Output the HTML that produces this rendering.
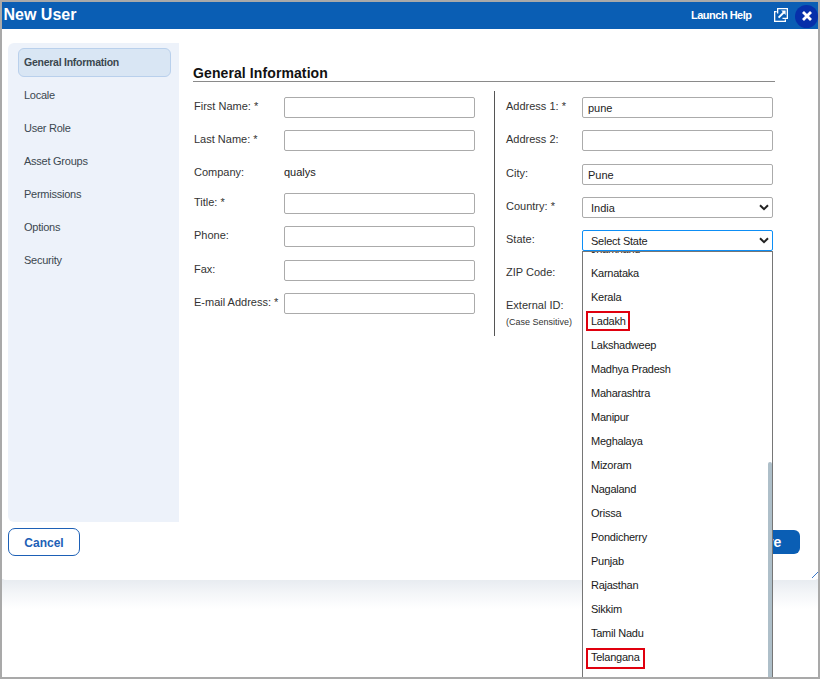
<!DOCTYPE html>
<html><head><meta charset="utf-8">
<style>
*{box-sizing:border-box;margin:0;padding:0}
html,body{width:820px;height:679px;overflow:hidden;background:#fff;font-family:"Liberation Sans",sans-serif}
#frame{position:absolute;left:0;top:0;width:820px;height:679px;border:2px solid #a9a9a9;background:#fff}
.abs{position:absolute}
#shadow{position:absolute;left:2px;top:579px;width:816px;height:30px;background:linear-gradient(#e7ebf0,#f3f5f8 45%,#fff)}
#dlg{position:absolute;left:2px;top:2px;width:816px;height:578px;background:#fff;border-radius:0 0 4px 4px}
#hdr{position:absolute;left:2px;top:2px;width:816px;height:27px;background:#0a5eb4}
#title{position:absolute;left:3.5px;top:6px;color:#fff;font-weight:bold;font-size:16px;line-height:18px}
#help{position:absolute;left:691px;top:9px;color:#fff;font-weight:bold;font-size:11px;letter-spacing:-0.5px;line-height:13px}
#close{position:absolute;left:795px;top:5px;width:23px;height:23px;border-radius:50%;background:#0630aa}
#side{position:absolute;left:8px;top:43px;width:171px;height:479px;background:#edf2fa;border-radius:6px 0 0 6px}
#active{position:absolute;left:18px;top:48px;width:153px;height:29px;background:#d9e6f4;border:1px solid #b9d0ec;border-radius:6px}
.nav{position:absolute;left:24px;font-size:11px;color:#3b474f;line-height:13px;letter-spacing:-0.25px}
.nav.b{font-weight:bold;font-size:10.5px;letter-spacing:-0.25px}
#gi{position:absolute;left:193px;top:65px;font-size:14px;font-weight:bold;letter-spacing:0.1px;color:#111;line-height:16px}
#giline{position:absolute;left:193px;top:81px;width:582px;height:1px;background:#8a8a8a}
.lbl{position:absolute;font-size:11px;color:#333;line-height:13px}
.inp{position:absolute;height:21px;border:1px solid #ababab;border-radius:2px;background:#fff}
.inp.l{left:284px;width:191px}
.inp.r{left:582px;width:191px}
.val{position:absolute;font-size:11px;color:#222;line-height:13px}
#div{position:absolute;left:494px;top:91px;width:1px;height:245px;background:#555}
.chev{position:absolute;left:759px;width:10px;height:7px}
#dd{position:absolute;left:582px;top:251px;width:191px;height:440px;background:#fff;border:1px solid #767676;overflow:hidden}
.opt{position:absolute;left:8px;font-size:11px;color:#1a1a1a;line-height:13px;white-space:nowrap;letter-spacing:-0.25px}
.red{position:absolute;border:2px solid #e0000e}
#thumb{position:absolute;left:768px;top:462px;width:4px;height:217px;background:#aebfc9;border-radius:2px 2px 0 0}
#cancel{position:absolute;left:8px;top:528px;width:72px;height:28px;border:1px solid #1d60b6;border-radius:7px;color:#1d60b6;font-weight:bold;font-size:12px;text-align:center;line-height:28px}
#save{position:absolute;left:730px;top:530px;width:70px;height:24px;background:#0a5eb4;border-radius:6px;color:#fff;font-weight:bold;font-size:14px;line-height:24px;text-align:center}
</style></head><body>
<div id="frame"></div>
<div id="shadow"></div>
<div id="dlg"></div>
<div id="hdr"></div>
<div id="title">New User</div>
<div id="help">Launch Help</div>
<svg class="abs" style="left:773px;top:7px" width="16" height="16" viewBox="0 0 16 16">
  <rect x="1.65" y="4.65" width="10.7" height="9.7" fill="none" stroke="#fff" stroke-width="1.3"/>
  <rect x="3.6" y="0.6" width="11.8" height="11.8" fill="#0a5eb4"/>
  <path d="M4.65 6.5V1.65H14.35V11.35H9.5" fill="none" stroke="#fff" stroke-width="1.3"/>
  <path d="M5.6 10.6L11.2 5" fill="none" stroke="#fff" stroke-width="2"/>
  <path d="M8.2 3.6H12.6V8z" fill="#fff"/>
</svg>
<div id="close"></div>
<svg class="abs" style="left:801px;top:10px" width="12" height="12" viewBox="0 0 12 12">
  <path d="M2 2L10 10M10 2L2 10" stroke="#fff" stroke-width="2.8"/>
</svg>

<div id="side"></div>
<div id="active"></div>
<div class="nav b" style="top:56px">General Information</div>
<div class="nav" style="top:89px">Locale</div>
<div class="nav" style="top:122px">User Role</div>
<div class="nav" style="top:155px">Asset Groups</div>
<div class="nav" style="top:188px">Permissions</div>
<div class="nav" style="top:221px">Options</div>
<div class="nav" style="top:254px">Security</div>

<div id="gi">General Information</div>
<div id="giline"></div>

<div class="lbl" style="left:194px;top:100px">First Name: *</div>
<div class="inp l" style="top:97px"></div>
<div class="lbl" style="left:194px;top:133px">Last Name: *</div>
<div class="inp l" style="top:130px"></div>
<div class="lbl" style="left:194px;top:166px">Company:</div>
<div class="val" style="left:284px;top:166px">qualys</div>
<div class="lbl" style="left:194px;top:196px">Title: *</div>
<div class="inp l" style="top:193px"></div>
<div class="lbl" style="left:194px;top:229px">Phone:</div>
<div class="inp l" style="top:226px"></div>
<div class="lbl" style="left:194px;top:263px">Fax:</div>
<div class="inp l" style="top:260px"></div>
<div class="lbl" style="left:194px;top:296px">E-mail Address: *</div>
<div class="inp l" style="top:293px"></div>

<div id="div"></div>

<div class="lbl" style="left:506px;top:100px">Address 1: *</div>
<div class="inp r" style="top:97px"></div>
<div class="val" style="left:588px;top:102px">pune</div>
<div class="lbl" style="left:506px;top:133px">Address 2:</div>
<div class="inp r" style="top:130px"></div>
<div class="lbl" style="left:506px;top:167px">City:</div>
<div class="inp r" style="top:164px"></div>
<div class="val" style="left:588px;top:169px">Pune</div>
<div class="lbl" style="left:506px;top:200px">Country: *</div>
<div class="inp r" style="top:197px;height:21px"></div>
<div class="val" style="left:591px;top:202px">India</div>
<svg class="chev" style="top:204px" viewBox="0 0 10 7"><path d="M1 1.2L5 5.2L9 1.2" fill="none" stroke="#222" stroke-width="2"/></svg>
<div class="lbl" style="left:506px;top:233px">State:</div>
<div class="inp r" style="top:230px;height:21px;border-color:#0d8ef5"></div>
<div class="val" style="left:591px;top:235px;letter-spacing:-0.25px">Select State</div>
<svg class="chev" style="top:237px" viewBox="0 0 10 7"><path d="M1 1.2L5 5.2L9 1.2" fill="none" stroke="#222" stroke-width="2"/></svg>
<div class="lbl" style="left:506px;top:266px">ZIP Code:</div>
<div class="lbl" style="left:506px;top:299px">External ID:</div>
<div class="lbl" style="left:506px;top:316px;font-size:9px">(Case Sensitive)</div>

<div id="cancel">Cancel</div>
<div id="save">Save</div>

<div id="dd">
  <div class="opt" style="top:-9px">Jharkhand</div>
  <div class="opt" style="top:15px">Karnataka</div>
  <div class="opt" style="top:39px">Kerala</div>
  <div class="opt" style="top:63px">Ladakh</div>
  <div class="opt" style="top:87px">Lakshadweep</div>
  <div class="opt" style="top:111px">Madhya Pradesh</div>
  <div class="opt" style="top:135px">Maharashtra</div>
  <div class="opt" style="top:159px">Manipur</div>
  <div class="opt" style="top:183px">Meghalaya</div>
  <div class="opt" style="top:207px">Mizoram</div>
  <div class="opt" style="top:231px">Nagaland</div>
  <div class="opt" style="top:255px">Orissa</div>
  <div class="opt" style="top:279px">Pondicherry</div>
  <div class="opt" style="top:303px">Punjab</div>
  <div class="opt" style="top:327px">Rajasthan</div>
  <div class="opt" style="top:351px">Sikkim</div>
  <div class="opt" style="top:375px">Tamil Nadu</div>
  <div class="opt" style="top:399px">Telangana</div>
</div>
<div class="red" style="left:586px;top:311px;width:44px;height:20px"></div>
<div class="red" style="left:586px;top:648px;width:59px;height:21px"></div>
<div id="thumb"></div>
<svg class="abs" style="left:810px;top:568px" width="8" height="12" viewBox="0 0 8 12"><path d="M2 10L8 4" stroke="#3b78c8" stroke-width="1"/></svg>
<div class="abs" style="left:0;top:677px;width:820px;height:2px;background:#a9a9a9"></div>
<div class="abs" style="left:818px;top:0;width:2px;height:679px;background:#a9a9a9"></div>
<div class="abs" style="left:0;top:0;width:2px;height:679px;background:#a9a9a9"></div>
<div class="abs" style="left:0;top:0;width:820px;height:2px;background:#a9a9a9"></div>
</body></html>
